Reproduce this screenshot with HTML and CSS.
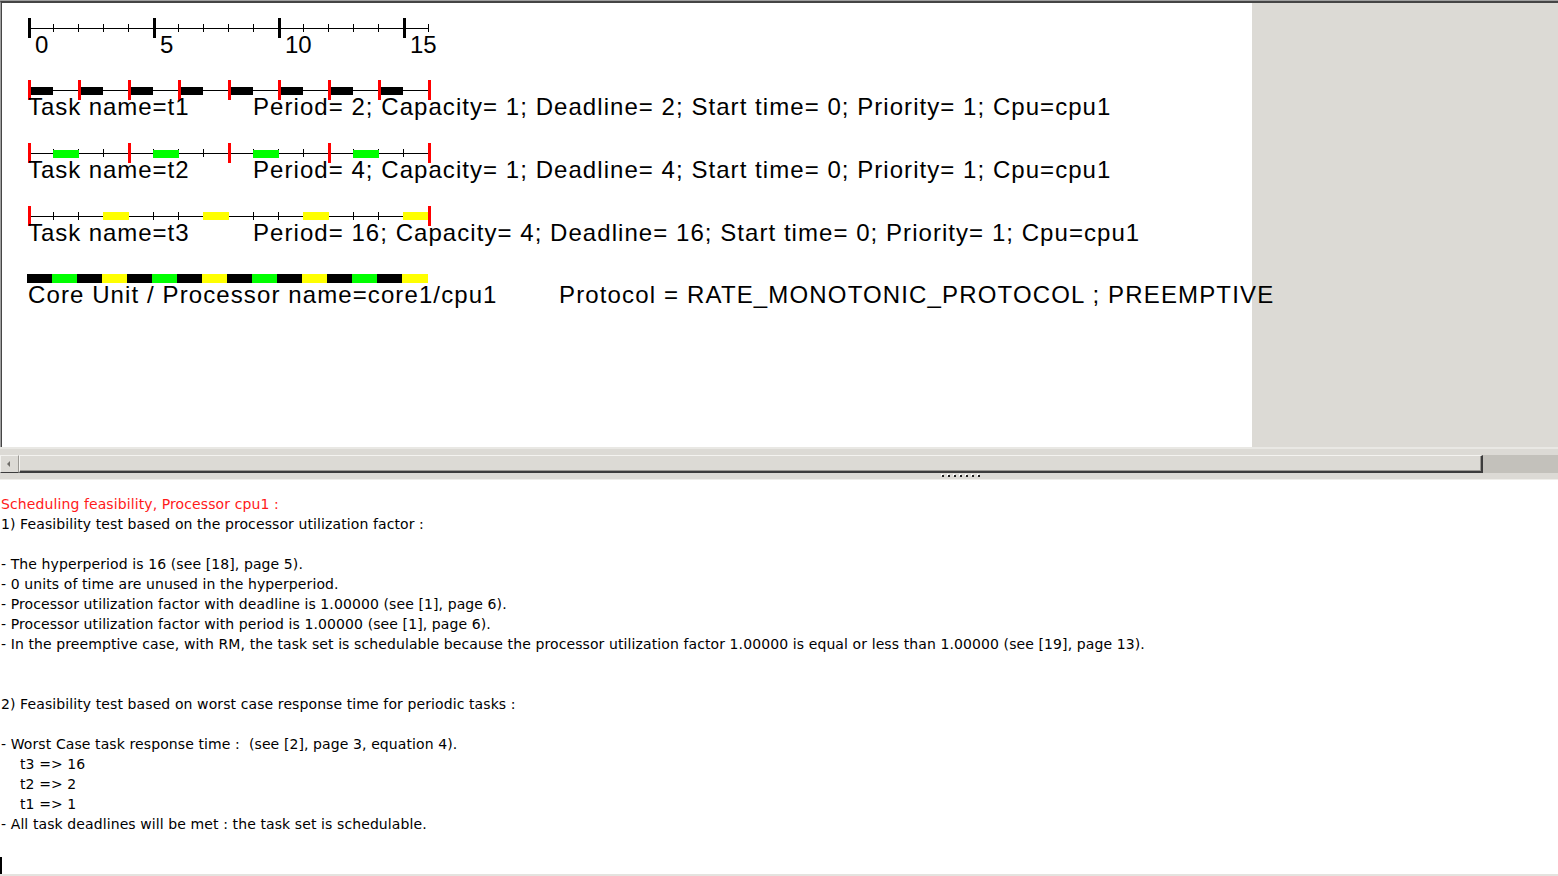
FILE: index.html
```html
<!DOCTYPE html>
<html>
<head>
<meta charset="utf-8">
<link rel="stylesheet" href="styles.css">
</head>
<body>
<div class="window">
  <div class="top">
    <div class="canvas">
      <svg class="chart" width="1250" height="444" viewBox="0 0 1250 444">
        <g transform="translate(-2,-3)">
          <!-- time axis -->
          <rect x="29" y="28" width="400" height="1" fill="#000"/>
          <g fill="#000">
            <rect x="53" y="24" width="1" height="8"/><rect x="78" y="24" width="1" height="8"/>
            <rect x="103" y="24" width="1" height="8"/><rect x="128" y="24" width="1" height="8"/>
            <rect x="178" y="24" width="1" height="8"/><rect x="203" y="24" width="1" height="8"/>
            <rect x="228" y="24" width="1" height="8"/><rect x="253" y="24" width="1" height="8"/>
            <rect x="303" y="24" width="1" height="8"/><rect x="328" y="24" width="1" height="8"/>
            <rect x="353" y="24" width="1" height="8"/><rect x="378" y="24" width="1" height="8"/>
            <rect x="428" y="24" width="1" height="8"/>
            <rect x="28" y="18" width="3" height="20"/><rect x="153" y="18" width="3" height="20"/>
            <rect x="278" y="18" width="3" height="20"/><rect x="403" y="18" width="3" height="20"/>
          </g>
          <g class="axis-label">
            <text x="35" y="53">0</text><text x="160" y="53">5</text>
            <text x="285" y="53">10</text><text x="410" y="53">15</text>
          </g>

          <!-- task t1 -->
          <rect x="29" y="90" width="400" height="1" fill="#000"/>
          <g fill="#000">
            <rect x="29" y="87" width="24" height="8"/><rect x="79" y="87" width="24" height="8"/>
            <rect x="129" y="87" width="24" height="8"/><rect x="179" y="87" width="24" height="8"/>
            <rect x="229" y="87" width="24" height="8"/><rect x="279" y="87" width="24" height="8"/>
            <rect x="329" y="87" width="24" height="8"/><rect x="379" y="87" width="24" height="8"/>
          </g>
          <g fill="#ff0000">
            <rect x="28" y="80" width="3" height="20"/><rect x="78" y="80" width="3" height="20"/>
            <rect x="128" y="80" width="3" height="20"/><rect x="178" y="80" width="3" height="20"/>
            <rect x="228" y="80" width="3" height="20"/><rect x="278" y="80" width="3" height="20"/>
            <rect x="328" y="80" width="3" height="20"/><rect x="378" y="80" width="3" height="20"/>
            <rect x="428" y="80" width="3" height="20"/>
          </g>
          <text class="lbl name" x="28" y="115">Task name=t1</text>
          <text class="lbl" x="253" y="115">Period= 2; Capacity= 1; Deadline= 2; Start time= 0; Priority= 1; Cpu=cpu1</text>

          <!-- task t2 -->
          <rect x="29" y="153" width="400" height="1" fill="#000"/>
          <g fill="#000">
            <rect x="53" y="149" width="1" height="8"/><rect x="78" y="149" width="1" height="8"/>
            <rect x="103" y="149" width="1" height="8"/><rect x="153" y="149" width="1" height="8"/>
            <rect x="178" y="149" width="1" height="8"/><rect x="203" y="149" width="1" height="8"/>
            <rect x="253" y="149" width="1" height="8"/><rect x="278" y="149" width="1" height="8"/>
            <rect x="303" y="149" width="1" height="8"/><rect x="353" y="149" width="1" height="8"/>
            <rect x="378" y="149" width="1" height="8"/><rect x="403" y="149" width="1" height="8"/>
          </g>
          <g fill="#00ff00">
            <rect x="53" y="150" width="26" height="8"/><rect x="153" y="150" width="26" height="8"/>
            <rect x="253" y="150" width="26" height="8"/><rect x="353" y="150" width="26" height="8"/>
          </g>
          <g fill="#ff0000">
            <rect x="28" y="143" width="3" height="20"/><rect x="128" y="143" width="3" height="20"/>
            <rect x="228" y="143" width="3" height="20"/><rect x="328" y="143" width="3" height="20"/>
            <rect x="428" y="143" width="3" height="20"/>
          </g>
          <text class="lbl name" x="28" y="178">Task name=t2</text>
          <text class="lbl" x="253" y="178">Period= 4; Capacity= 1; Deadline= 4; Start time= 0; Priority= 1; Cpu=cpu1</text>

          <!-- task t3 -->
          <rect x="29" y="216" width="400" height="1" fill="#000"/>
          <g fill="#000">
            <rect x="53" y="212" width="1" height="8"/><rect x="78" y="212" width="1" height="8"/>
            <rect x="153" y="212" width="1" height="8"/><rect x="178" y="212" width="1" height="8"/>
            <rect x="253" y="212" width="1" height="8"/><rect x="278" y="212" width="1" height="8"/>
            <rect x="353" y="212" width="1" height="8"/><rect x="378" y="212" width="1" height="8"/>
          </g>
          <g fill="#ffff00">
            <rect x="103" y="212" width="26" height="8"/><rect x="203" y="212" width="26" height="8"/>
            <rect x="303" y="212" width="26" height="8"/><rect x="403" y="212" width="26" height="8"/>
          </g>
          <g fill="#ff0000">
            <rect x="28" y="206" width="3" height="20"/><rect x="428" y="206" width="3" height="20"/>
          </g>
          <text class="lbl name" x="28" y="241">Task name=t3</text>
          <text class="lbl" x="253" y="241">Period= 16; Capacity= 4; Deadline= 16; Start time= 0; Priority= 1; Cpu=cpu1</text>

          <!-- core -->
          <g>
            <rect x="27" y="274" width="25" height="9" fill="#000"/><rect x="52" y="274" width="25" height="9" fill="#00ff00"/>
            <rect x="77" y="274" width="25" height="9" fill="#000"/><rect x="102" y="274" width="25" height="9" fill="#ffff00"/>
            <rect x="127" y="274" width="25" height="9" fill="#000"/><rect x="152" y="274" width="25" height="9" fill="#00ff00"/>
            <rect x="177" y="274" width="25" height="9" fill="#000"/><rect x="202" y="274" width="25" height="9" fill="#ffff00"/>
            <rect x="227" y="274" width="25" height="9" fill="#000"/><rect x="252" y="274" width="25" height="9" fill="#00ff00"/>
            <rect x="277" y="274" width="25" height="9" fill="#000"/><rect x="302" y="274" width="25" height="9" fill="#ffff00"/>
            <rect x="327" y="274" width="25" height="9" fill="#000"/><rect x="352" y="274" width="25" height="9" fill="#00ff00"/>
            <rect x="377" y="274" width="25" height="9" fill="#000"/><rect x="402" y="274" width="26" height="9" fill="#ffff00"/>
          </g>
          <text class="lbl core" x="28" y="303">Core Unit / Processor name=core1/cpu1</text>
          <text class="lbl proto" x="559" y="303">Protocol = RATE_MONOTONIC_PROTOCOL ; PREEMPTIVE</text>
        </g>
      </svg>
    </div>
    <div class="filler"></div>
  </div>
  <div class="hgap"></div>
  <div class="scrollbar">
    <div class="arrow"><span class="tri"></span></div>
    <div class="thumb"></div>
  </div>
  <div class="splitter">
    <div class="grips"><i></i><i></i><i></i><i></i><i></i><i></i><i></i></div>
  </div>
  <div class="log">
    <div class="line red">Scheduling feasibility, Processor cpu1 :</div>
    <div class="line">1) Feasibility test based on the processor utilization factor :</div>
    <div class="line"></div>
    <div class="line">- The hyperperiod is 16 (see [18], page 5).</div>
    <div class="line">- 0 units of time are unused in the hyperperiod.</div>
    <div class="line">- Processor utilization factor with deadline is 1.00000 (see [1], page 6).</div>
    <div class="line">- Processor utilization factor with period is 1.00000 (see [1], page 6).</div>
    <div class="line">- In the preemptive case, with RM, the task set is schedulable because the processor utilization factor 1.00000 is equal or less than 1.00000 (see [19], page 13).</div>
    <div class="line"></div>
    <div class="line"></div>
    <div class="line">2) Feasibility test based on worst case response time for periodic tasks :</div>
    <div class="line"></div>
    <div class="line">- Worst Case task response time :  (see [2], page 3, equation 4).</div>
    <div class="line indent">t3 =&gt; 16</div>
    <div class="line indent">t2 =&gt; 2</div>
    <div class="line indent">t1 =&gt; 1</div>
    <div class="line">- All task deadlines will be met : the task set is schedulable.</div>
    <div class="line"></div>
    <div class="line"><span class="cursor"></span></div>
  </div>
</div>
</body>
</html>
```

FILE: styles.css
```css
html, body {
  margin: 0;
  padding: 0;
  width: 1558px;
  height: 876px;
  overflow: hidden;
  background: #ffffff;
}

.window {
  width: 1558px;
  height: 876px;
  display: flex;
  flex-direction: column;
  border-top: 1px solid #a0a0a0;
  box-sizing: border-box;
}

.top {
  height: 446px;
  display: flex;
  background: #dcdad5;
  border-top: 2px solid #454545;
  border-left: 1px solid #a0a0a0;
  box-sizing: border-box;
}

.canvas {
  width: 1250px;
  height: 100%;
  background: #ffffff;
  border-left: 1px solid #454545;
  position: relative;
  z-index: 1;
}

.chart {
  display: block;
  overflow: visible;
}

.chart .axis-label,
.chart .lbl {
  font-family: "Liberation Sans", Arial, sans-serif;
  font-size: 24px;
  fill: #000;
}

.chart .lbl {
  letter-spacing: 1.05px;
}

.chart .lbl.name {
  letter-spacing: 0.95px;
}

.chart .lbl.core {
  letter-spacing: 1.1px;
}

.chart .lbl.proto {
  letter-spacing: 1.15px;
}

.filler {
  flex: 1;
  background: #dcdad5;
}

.hgap {
  height: 8px;
  background: #dcdad5;
  border-top: 2px solid #e9e8e4;
  box-sizing: border-box;
}

.scrollbar {
  height: 18px;
  display: flex;
  background: #c3c1bb;
}

.arrow {
  width: 19px;
  height: 18px;
  box-sizing: border-box;
  background: #dcdad5;
  border-top: 1px solid #f2f1ee;
  border-left: 1px solid #f2f1ee;
  border-right: 1px solid #9a9893;
  border-bottom: 1px solid #3c3c3c;
  display: flex;
  align-items: center;
  padding-left: 6px;
}

.tri {
  width: 0;
  height: 0;
  border-top: 3px solid transparent;
  border-bottom: 3px solid transparent;
  border-right: 3px solid #6e6c68;
}

.thumb {
  width: 1464px;
  height: 18px;
  box-sizing: border-box;
  background: #dcdad5;
  border-top: 1px solid #f4f3f0;
  border-left: 1px solid #f4f3f0;
  border-right: 2px solid #3c3c3c;
  border-bottom: 2px solid #3c3c3c;
  box-shadow: inset -1px -1px 0 #9a9893;
}

.splitter {
  height: 8px;
  background: #dcdad5;
  border-bottom: 1px solid #efeeea;
  box-sizing: border-box;
  display: flex;
  align-items: center;
}

.grips {
  margin-left: 942px;
  display: flex;
  gap: 4px;
}

.grips i {
  display: block;
  width: 2px;
  height: 2px;
  background: #202020;
  box-shadow: -1px -1px 0 #ffffff;
}

.log {
  flex: 1;
  background: #ffffff;
  padding-top: 14px;
  font-family: "DejaVu Sans", sans-serif;
  font-size: 14px;
  letter-spacing: 0.1px;
  color: #000000;
  border-bottom: 2px solid #e4e3df;
}

.line {
  height: 20px;
  line-height: 20px;
  white-space: pre;
  padding-left: 1px;
}

.line.red {
  color: #ff1a1a;
}

.line.indent {
  padding-left: 20px;
}

.cursor {
  display: inline-block;
  width: 2px;
  height: 17px;
  background: #000;
  vertical-align: middle;
  margin-left: -1px;
}
```
